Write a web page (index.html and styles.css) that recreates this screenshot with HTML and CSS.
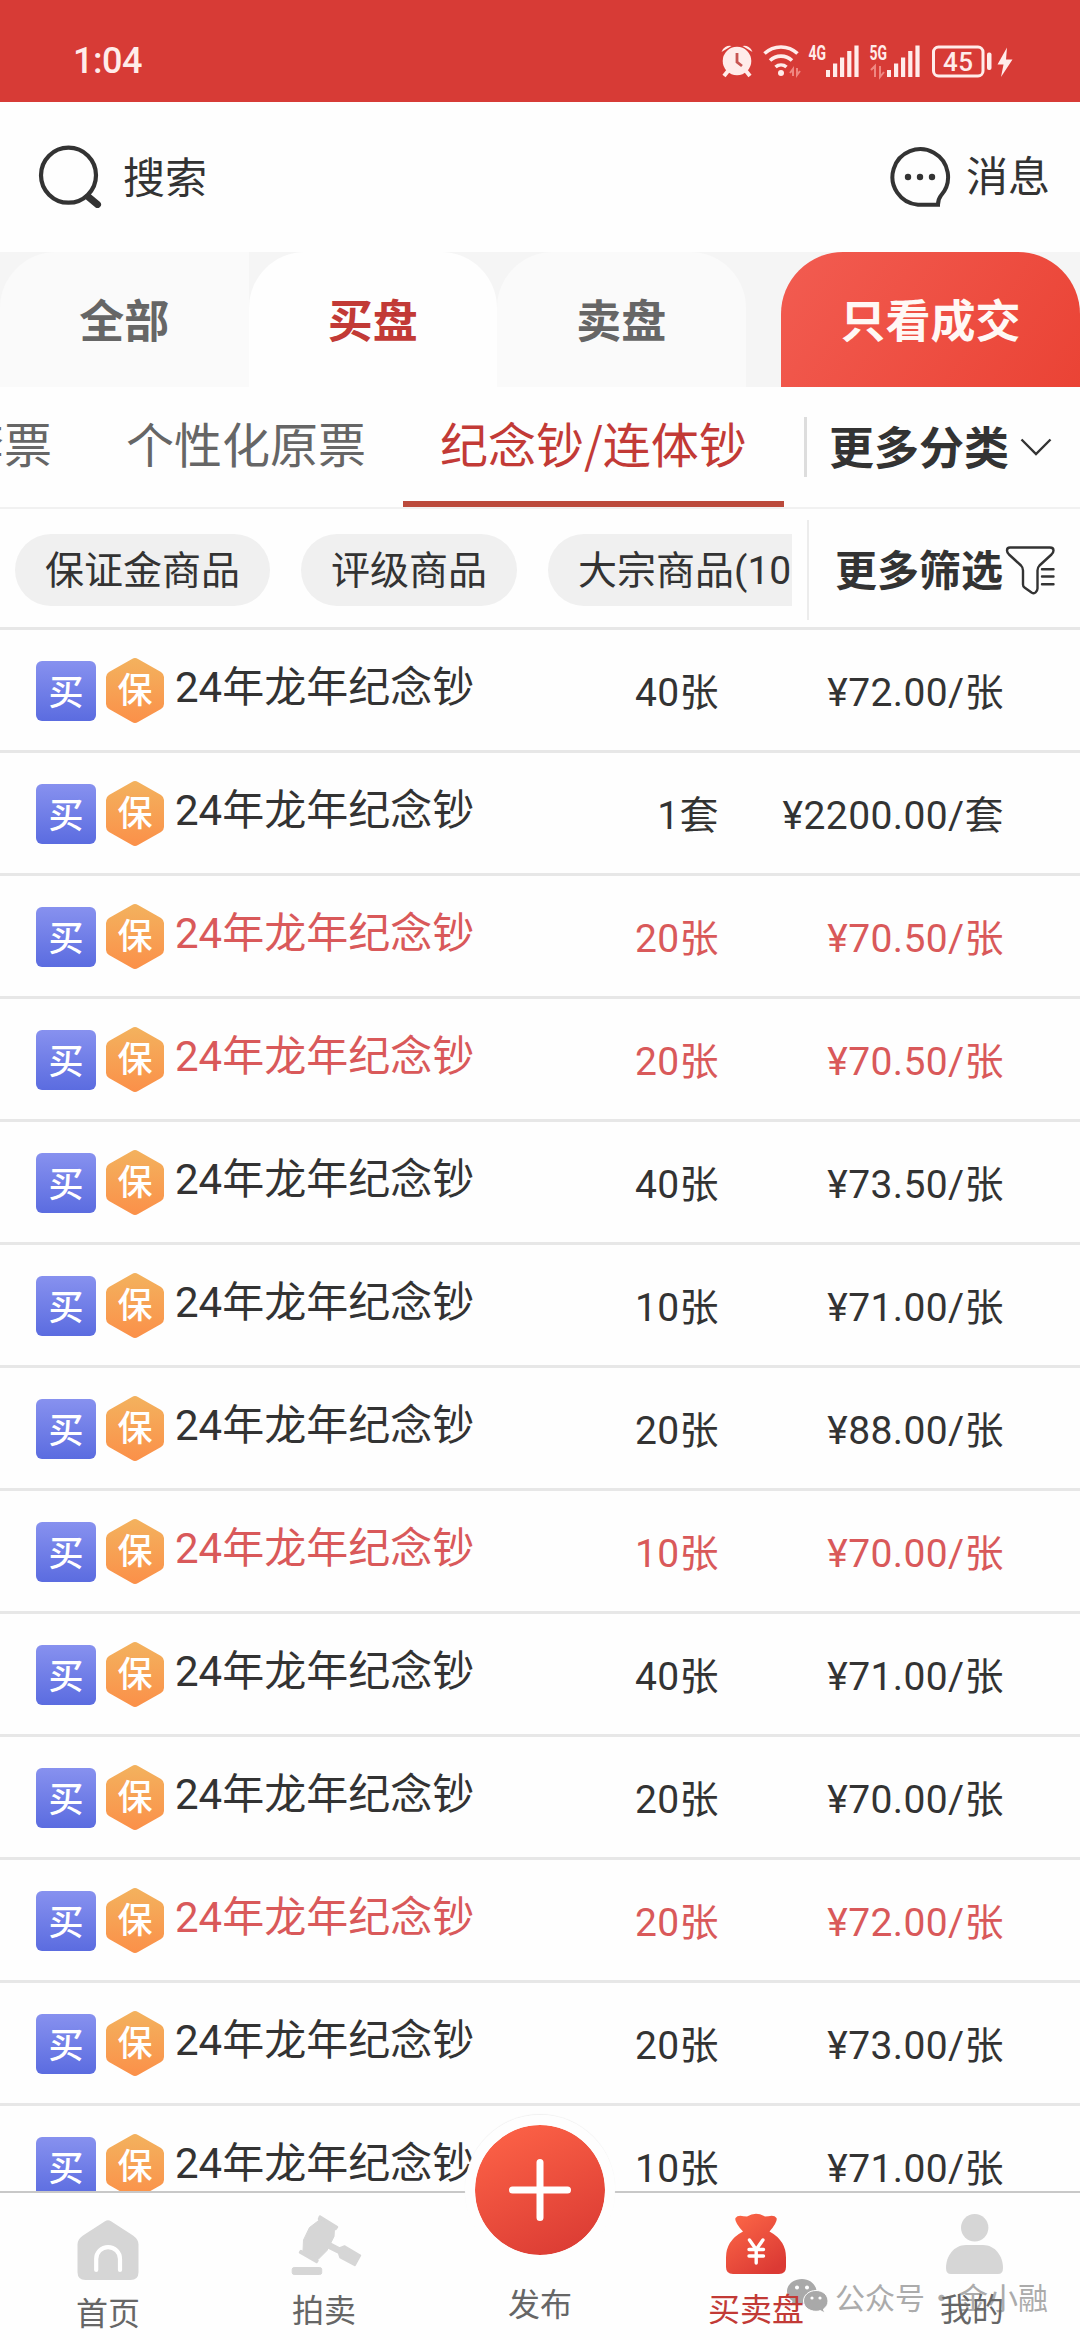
FILE: index.html
```html
<!DOCTYPE html>
<html lang="zh-CN">
<head>
<meta charset="utf-8">
<title>买卖盘</title>
<link rel="stylesheet" href="styles.css">
</head>
<body>
<div class="app">
  <header class="status">
    <span class="time">1:04</span>
    <svg class="status-icons" viewBox="716 40 300 42" width="300" height="42">
      <g fill="#ffecea">
        <circle cx="737" cy="61" r="14.3"/>
        <path d="M721.500 52a8.500 8.500 0 0 1 10-6z M752.500 52a8.500 8.500 0 0 0-10-6z"/>
        <path d="M728 71l-4 5M746 71l4 5" stroke="#ffecea" stroke-width="4"/>
        <circle cx="781" cy="73" r="3"/>
        <path d="M826 70h4v7h-4zM833 63.500h4.200v13.500h-4.200zM840 57.500h4.200v19.500h-4.200zM847.200 51h4.200v26h-4.200zM854.400 45.500h4.200v31.500h-4.200z"/>
        <path d="M887 70h4v7h-4zM894 63.500h4.200v13.500h-4.200zM901 57.500h4.200v19.500h-4.200zM908.200 51h4.200v26h-4.200zM915.400 45.500h4.200v31.500h-4.200z"/>
        <rect x="987" y="52.500" width="4.500" height="17.500" rx="2"/>
        <path d="M1007 47.500l-9.500 17h6l-2.500 12.500 11.500-17.500h-6.500z"/>
      </g>
      <path d="M737 53v9l5 4" fill="none" stroke="#c75552" stroke-width="2.800"/>
      <path d="M764.500 53.500a24 24 0 0 1 33 0M770 60.500a16 16 0 0 1 22 0M775.500 67a8.500 8.500 0 0 1 11 0" fill="none" stroke="#ffecea" stroke-width="3.600"/>
      <path d="M790 73l3-4v7M797 68v7l3-4M871 70l4-4v11M880 66v11l4-5" fill="none" stroke="#ef8781" stroke-width="2"/>
      <rect x="933.500" y="47" width="49.500" height="29" rx="5" fill="none" stroke="#ffecea" stroke-width="3"/>
      <text class="net" x="808.500" y="59.500" textLength="17.500" lengthAdjust="spacingAndGlyphs">4G</text>
      <text class="net" x="869.500" y="59.500" textLength="17.500" lengthAdjust="spacingAndGlyphs">5G</text>
      <text class="charge" x="943" y="70.500" textLength="30">45</text>
    </svg>
  </header>

  <div class="topbar">
    <div class="action">
      <svg viewBox="38 144 64 64" width="64" height="64" fill="none" stroke="#333">
        <circle cx="68.500" cy="175.200" r="27.500" stroke-width="4.200"/>
        <path d="M88.500 197l9 7.500" stroke-width="7" stroke-linecap="round"/>
      </svg>
      <span class="search-label">搜索</span>
    </div>
    <div class="action">
      <svg viewBox="890 145 63 63" width="63" height="63">
        <path d="M939 204.700H919A27.800 27.800 0 1 1 942 195.500C939.500 198.500 939 200.500 939 204.700Z" fill="none" stroke="#333" stroke-width="4"/>
        <g fill="#333"><circle cx="909" cy="177" r="3.200"/><circle cx="921" cy="177" r="3.200"/><circle cx="933" cy="177" r="3.200"/></g>
      </svg>
      <span class="message-label">消息</span>
    </div>
  </div>

  <nav class="tabs">
    <span class="tab">全部</span>
    <span class="tab active">买盘</span>
    <span class="tab">卖盘</span>
    <span class="tab-deal">只看成交</span>
  </nav>

  <div class="categories">
    <div class="cat-scroll">
      <span class="cat">套票</span>
      <span class="cat">个性化原票</span>
      <span class="cat current">纪念钞/连体钞</span>
    </div>
    <div class="more-cat">
      <span>更多分类</span>
      <svg viewBox="0 0 32 20" width="32" height="20"><path d="M1.500 2.500L16 17 30.500 2.500" fill="none" stroke="#333" stroke-width="2.400"/></svg>
    </div>
  </div>

  <div class="filters">
    <div class="pills">
      <span class="pill">保证金商品</span>
      <span class="pill">评级商品</span>
      <span class="pill">大宗商品(1000+)</span>
    </div>
    <div class="more-filter">
      <span>更多筛选</span>
      <svg viewBox="1004 545 50 51" width="50" height="51" fill="none" stroke="#333" stroke-width="2.400" stroke-linejoin="round" stroke-linecap="round">
        <path d="M1009 547.500h40q3.500 0 3.500 3 0 2-2 4l-12 11q-2 2-2 5v18q0 2-2 4-1.500 1.500-4 0l-7-5q-1.500-1-1.500-3v-14q0-3-2-5l-12-11q-2-2-2-4 0-3 3-3z"/>
        <path d="M1041 569.300h11.500M1041 576.500h11.500M1041 584.200h11.500"/>
      </svg>
    </div>
  </div>

  <main class="list">
    <div class="row"><i class="buy">买</i><i class="bond">保</i><span class="name">24年龙年纪念钞</span><span class="qty">40张</span><span class="price">¥72.00/张</span></div>
    <div class="row"><i class="buy">买</i><i class="bond">保</i><span class="name">24年龙年纪念钞</span><span class="qty">1套</span><span class="price">¥2200.00/套</span></div>
    <div class="row deal"><i class="buy">买</i><i class="bond">保</i><span class="name">24年龙年纪念钞</span><span class="qty">20张</span><span class="price">¥70.50/张</span></div>
    <div class="row deal"><i class="buy">买</i><i class="bond">保</i><span class="name">24年龙年纪念钞</span><span class="qty">20张</span><span class="price">¥70.50/张</span></div>
    <div class="row"><i class="buy">买</i><i class="bond">保</i><span class="name">24年龙年纪念钞</span><span class="qty">40张</span><span class="price">¥73.50/张</span></div>
    <div class="row"><i class="buy">买</i><i class="bond">保</i><span class="name">24年龙年纪念钞</span><span class="qty">10张</span><span class="price">¥71.00/张</span></div>
    <div class="row"><i class="buy">买</i><i class="bond">保</i><span class="name">24年龙年纪念钞</span><span class="qty">20张</span><span class="price">¥88.00/张</span></div>
    <div class="row deal"><i class="buy">买</i><i class="bond">保</i><span class="name">24年龙年纪念钞</span><span class="qty">10张</span><span class="price">¥70.00/张</span></div>
    <div class="row"><i class="buy">买</i><i class="bond">保</i><span class="name">24年龙年纪念钞</span><span class="qty">40张</span><span class="price">¥71.00/张</span></div>
    <div class="row"><i class="buy">买</i><i class="bond">保</i><span class="name">24年龙年纪念钞</span><span class="qty">20张</span><span class="price">¥70.00/张</span></div>
    <div class="row deal"><i class="buy">买</i><i class="bond">保</i><span class="name">24年龙年纪念钞</span><span class="qty">20张</span><span class="price">¥72.00/张</span></div>
    <div class="row"><i class="buy">买</i><i class="bond">保</i><span class="name">24年龙年纪念钞</span><span class="qty">20张</span><span class="price">¥73.00/张</span></div>
    <div class="row"><i class="buy">买</i><i class="bond">保</i><span class="name">24年龙年纪念钞</span><span class="qty">10张</span><span class="price">¥71.00/张</span></div>
  </main>

  <footer class="bottom">
    <div class="watermark">
      <svg viewBox="0 0 42 34" width="42" height="34">
        <path d="M15 0C6.500 0 0 5.500 0 12.500c0 4 2 7.300 5.500 9.500L4 26.500l5.500-2.800c2 .5 3.500.8 5.500.8 8 0 14.500-5.500 14.500-12S23 0 15 0z" fill="#a9a9a9"/>
        <path d="M29 11.500c-7 0-12.500 4.700-12.500 10.500S22 32.300 29 32.300c1.600 0 3-.2 4.500-.7l4 2.400-1-4c3-2 4.500-4.700 4.500-8 0-5.800-5-10.500-12-10.500z" fill="#a9a9a9" stroke="#fff" stroke-width="1"/>
        <g fill="#fff"><circle cx="10" cy="8.500" r="2"/><circle cx="20" cy="8.500" r="2"/><circle cx="25" cy="19" r="1.600"/><circle cx="33" cy="19" r="1.600"/></g>
      </svg>
      <span>公众号</span><span class="dot">·</span><span>金小融</span>
    </div>
    <a class="item home">
      <svg viewBox="77 2219 62 62" width="62" height="62">
        <path d="M105 2221.300q3-2 6 0l22 14.200q5.500 4 5.500 9v27.500q0 8-8 8h-45q-8 0-8-8v-27.500q0-5 5.500-9z" fill="#d6d6d6"/>
        <path d="M96.200 2270v-11a11.900 11.900 0 0 1 23.800 0v11" fill="none" stroke="#fff" stroke-width="4.200" stroke-linecap="round"/>
      </svg>
      <span>首页</span>
    </a>
    <a class="item auction">
      <svg viewBox="290.500 2214 71 62" width="71" height="62" fill="#d6d6d6" stroke="#d6d6d6" stroke-linejoin="round">
        <path d="M319.500 2216.500l17 10.500-1.500 2-16.500-10zM300.500 2251l16.500 9.500-1 1.500-16.500-9.500z" stroke-width="2.500"/>
        <path d="M319.500 2219.500l14.500 9-.5 8-7 14-9 9-15-8.500.5-11 6-12.500z"/>
        <path d="M328.500 2242.500l10.500 5.500 5-2 16 9.500-5.500 10-15-8-1.500-4.500-12-6z" stroke-width="1.500"/>
        <rect x="291.700" y="2267.500" width="29.500" height="7" rx="2"/>
      </svg>
      <span>拍卖</span>
    </a>
    <a class="item publish">
      <span class="publish-btn">
        <svg viewBox="0 0 64 64" width="64" height="64"><path d="M32 4.500v55M4.500 32h55" stroke="#fff" stroke-width="7" stroke-linecap="round"/></svg>
      </span>
      <span>发布</span>
    </a>
    <a class="item trade">
      <svg viewBox="725 2213 62 62" width="62" height="62">
        <defs><linearGradient id="bag" x1="0" y1="0" x2=".7" y2="1"><stop offset="0" stop-color="#ff6a48"/><stop offset="1" stop-color="#db3a34"/></linearGradient></defs>
        <path d="M743 2231.500q-9-10-7.500-13.500 2-3 8-1.800l3.500.3q9-5.500 18 0l3.500-.3q6-1.200 8 1.800 1.500 3.500-7 13.500 16.500 9 16.500 26v9.500q0 7-7 7h-46q-7 0-7-7v-9.500q0-17 17-26z" fill="url(#bag)"/>
        <path d="M749.500 2240l6.700 9.500 6.700-9.500M749 2249.500h14.500M749 2256h14.500M756.200 2249v14" fill="none" stroke="#fff" stroke-width="3.400" stroke-linecap="round"/>
      </svg>
      <span>买卖盘</span>
    </a>
    <a class="item mine">
      <svg viewBox="943 2213 60 62" width="60" height="62" fill="#d6d6d6">
        <circle cx="973.700" cy="2227.700" r="13.700"/>
        <path d="M945 2268c0-12 8-23 20-23h17c12 0 20 11 20 23q0 6-5 6h-47q-5 0-5-6z"/>
      </svg>
      <span>我的</span>
    </a>
  </footer>
</div>
</body>
</html>
```

FILE: styles.css
```css
* { box-sizing: border-box; }

body {
  margin: 0;
  background: #fefefe;
  color: #333;
  font-family: "Noto Sans CJK SC", sans-serif;
}

svg { display: block; flex: none; }
i { font-style: normal; }

.app {
  display: flex;
  flex-direction: column;
  width: 1080px;
  height: 2340px;
  overflow: hidden;
}

/* status bar */
.status {
  flex: none;
  display: flex;
  justify-content: space-between;
  align-items: center;
  height: 102px;
  padding: 20px 64px 0 73px;
  background: #d73b36;
  color: #ffecea;
}
.time {
  font: 500 36px/42px Roboto, sans-serif;
  letter-spacing: -0.5px;
}
.net { font: 700 20px Roboto, sans-serif; fill: #ffecea; }
.charge { font: 500 26px Roboto, sans-serif; fill: #ffecea; }

/* search and messages */
.topbar {
  flex: none;
  display: flex;
  justify-content: space-between;
  height: 150px;
  padding: 42px 30px 0 38px;
}
.action {
  display: flex;
  align-items: center;
  height: 64px;
  font-size: 42px;
  line-height: 60px;
}
.search-label { margin: -2px 0 0 21px; }
.message-label { margin: -4px 0 0 14px; }

/* main tabs */
.tabs {
  flex: none;
  display: flex;
  height: 135px;
  background: #f5f5f5;
  font-size: 45px;
  font-weight: 700;
  line-height: 133px;
  text-align: center;
}
.tab {
  width: 248.500px;
  border-radius: 56px 56px 0 0;
  background: #fafafa;
  color: #666;
}
.tab:first-child { border-top-right-radius: 0; }
.tab.active {
  background: #fefefe;
  color: #c23a36;
}
.tab-deal {
  width: 299px;
  margin-left: auto;
  border-radius: 62px 62px 0 0;
  background: linear-gradient(125deg, #f25c51, #ea4335);
  color: #fff8f5;
}

/* categories */
.categories {
  flex: none;
  display: flex;
  height: 122px;
  border-bottom: 2px solid #f1f1f1;
}
.cat-scroll {
  flex: none;
  display: flex;
  width: 885px;
  margin-left: -81px;
}
.cat {
  flex: none;
  height: 120px;
  padding: 0 37px;
  border-bottom: 6px solid transparent;
  color: #666;
  font-size: 48px;
  line-height: 110px;
}
.cat.current {
  border-color: #bb4a3c;
  color: #c23a36;
}
.more-cat {
  display: flex;
  align-items: center;
  gap: 11px;
  height: 60px;
  margin-top: 30px;
  padding-left: 22px;
  border-left: 3px solid #ddd;
  font-size: 45px;
  font-weight: 700;
  line-height: 60px;
}
.more-cat span { margin-top: -2px; }

/* filter pills */
.filters {
  flex: none;
  display: flex;
  height: 121px;
  border-bottom: 3px solid #e7e7e7;
}
.pills {
  display: flex;
  gap: 31px;
  width: 792px;
  padding: 25px 0 0 15px;
  overflow: hidden;
}
.pill {
  flex: none;
  height: 72px;
  padding: 0 30px;
  border-radius: 36px;
  background: #f0f0f0;
  font-family: Roboto, "Noto Sans CJK SC", sans-serif;
  font-size: 39px;
  line-height: 75px;
}
.more-filter {
  display: flex;
  align-items: center;
  gap: 2px;
  height: 100px;
  margin: 11px 0 0 15px;
  padding-left: 26px;
  border-left: 2px solid #ececec;
  font-size: 42px;
  font-weight: 700;
}
.more-filter span { margin-top: -5px; }

/* offers */
.list {
  flex: 1;
  min-height: 0;
  overflow: hidden;
}
.row {
  display: grid;
  grid-template-columns: 60px 58px 1fr 200px 275px;
  column-gap: 10px;
  align-items: center;
  height: 123px;
  padding: 1px 76px 0 36px;
  border-bottom: 3px solid #e7e7e7;
}
.deal { color: #d9595a; }
.buy, .bond {
  color: #fff;
  font-weight: 500;
  font-size: 35px;
  text-align: center;
}
.buy {
  height: 60px;
  border-radius: 6px;
  background: linear-gradient(#8791ef, #5b6ce0);
  line-height: 57px;
}
.bond {
  height: 65px;
  background: linear-gradient(#f3b25e, #fb9049);
  clip-path: path("M26 1Q29 -1 32 1L55 14Q58 16 58 19V46Q58 49 55 51L32 64Q29 66 26 64L3 51Q0 49 0 46V19Q0 16 3 14Z");
  line-height: 60px;
}
.name, .qty, .price {
  font-family: Roboto, "Noto Sans CJK SC", sans-serif;
  line-height: 60px;
  white-space: nowrap;
}
.name {
  padding: 0 0 5px 1px;
  font-size: 42px;
}
.qty, .price {
  padding-top: 5px;
  font-size: 39px;
  letter-spacing: 0.4px;
  text-align: right;
}

/* bottom navigation */
.bottom {
  position: relative;
  flex: none;
  display: grid;
  grid-template-columns: repeat(5, 216px);
  height: 149px;
  border-top: 2px solid #c8c8c8;
  background: #fefefe;
}
.item {
  position: relative;
  display: flex;
  flex-direction: column;
  align-items: center;
  color: #666;
  font-size: 32px;
  line-height: 46px;
}
.home { padding-top: 26px; }
.home span { margin-top: 7px; }
.auction { padding-top: 21px; }
.auction svg { margin-left: 5px; }
.auction span, .trade span, .mine span { margin-top: 9px; }
.trade, .mine { padding-top: 20px; }
.trade { color: #c23a36; }
.mine svg { margin-left: 3px; }
.publish { padding-top: 86px; }
.publish-btn {
  position: absolute;
  top: -78px;
  left: 33px;
  display: grid;
  place-items: center;
  width: 150px;
  height: 150px;
  border: 10px solid #fefefe;
  border-radius: 50%;
  background: linear-gradient(155deg, #ff6548, #d83832) padding-box;
  box-shadow: 0 -1px 1px #f0f0f0;
}
.watermark {
  position: absolute;
  top: 86px;
  left: 787px;
  display: flex;
  align-items: center;
  color: #ababab;
  font-size: 30px;
  line-height: 34px;
}
.watermark svg { margin-right: 6px; }
.dot { width: 33px; text-align: center; }
```
